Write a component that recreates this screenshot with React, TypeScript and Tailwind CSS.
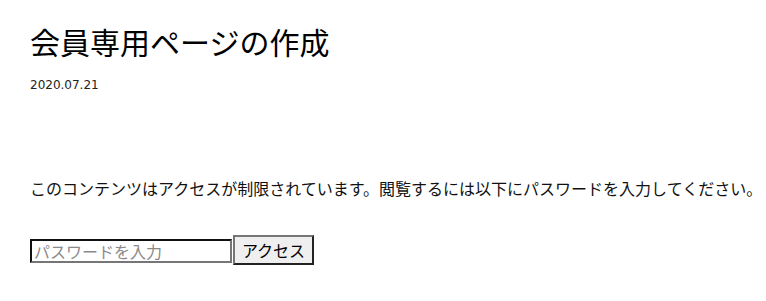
export default function App() {
  return (
    <div className="min-h-[301px] bg-white pl-[30px] pt-[23px] text-black font-['Noto_Sans_CJK_JP','Noto_Sans',sans-serif]">
      {/* Post header */}
      <h1 className="text-[30px] font-normal leading-[36px]">会員専用ページの作成</h1>
      <p className="mt-[18px] text-[12px] leading-[16px] font-['DejaVu_Sans',sans-serif] text-[#222]">2020.07.21</p>

      {/* Protected content notice */}
      <p className="mt-[83px] whitespace-nowrap text-[16px] leading-[24px] text-[#111]">
        このコンテンツはアクセスが制限されています。閲覧するには以下にパスワードを入力してください。
      </p>

      <form className="mt-[35px] flex items-start" onSubmit={(e) => e.preventDefault()}>
        <input
          type="password"
          placeholder="パスワードを入力"
          className="mt-[4px] h-[24px] w-[202px] border-2 border-t-[#111] border-l-[#111] border-r-[#767676] border-b-[#767676] bg-white px-[2px] text-[16px] leading-[20px] outline-none placeholder:text-[#8a8a8a]"
        />
        <button
          type="submit"
          className="ml-px h-[30px] w-[81px] border-2 border-t-[#767676] border-l-[#767676] border-r-[#222] border-b-[#222] bg-[#efefef] text-center text-[16px] leading-[24px]"
        >
          アクセス
        </button>
      </form>
    </div>
  );
}
